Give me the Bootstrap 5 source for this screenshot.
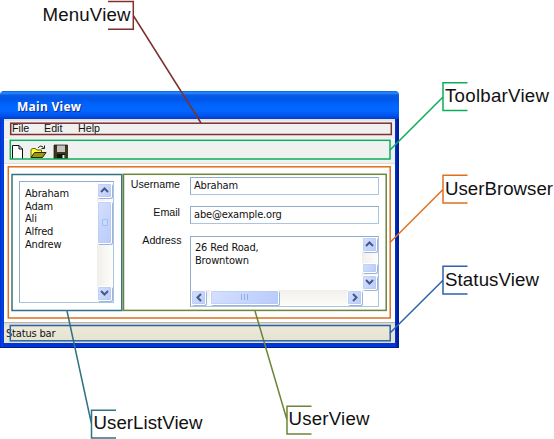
<!DOCTYPE html>
<html lang="en">
<head>
<meta charset="utf-8">
<title>Main View</title>
<link href="https://cdn.jsdelivr.net/npm/bootstrap@5.3.0/dist/css/bootstrap.min.css" rel="stylesheet">
<style>
body{width:554px;height:439px;background:#fff;font-family:"Liberation Sans",Arial,sans-serif;color:#111}
.canvas{width:554px;height:439px;padding-top:91px}
.callouts{pointer-events:none}
.callouts text{font-size:18.67px;fill:#111}
.win{width:399px;height:257px;background:linear-gradient(90deg,#0a2cc8,#0046e6 2px,#0038d8 4px,#0038d8 395px,#0020a8 397px,#001a90);border-radius:5px 5px 0 0;padding:0 4px 4px;border-bottom:1px solid #001a90}
.titlebar{height:28px;margin:0 -4px;padding:3px 0 0 17px;border-radius:4px 4px 0 0;background:linear-gradient(#0a62e4,#2b8cff 2px,#0a5ce6 4px,#0056e8 8px,#0066ff 15px,#0066ff 20px,#0050e8 25px,#003cc8);color:#fff;font:bold 12px "Noto Sans","Open Sans",sans-serif;letter-spacing:.3px;text-shadow:1px 1px #0a2f9c}
.menus{height:21px;background:#f0f0f0;border-top:2px solid #e2e2ea;border-bottom:1px solid #fff;font-size:10.7px;padding:1px 0 0 8px;line-height:13px}
.menus span:nth-child(1){width:32px}.menus span:nth-child(2){width:34px}
.tools{height:24px;background:#f0f1f1;border-bottom:1px solid #deded2;padding:4px 0 0 8px}
.main{height:159px;padding:17px 0 0 15px}
.tah{font:11px/12.8px "DejaVu Sans Condensed","DejaVu Sans",sans-serif;letter-spacing:-.17px}
.field{border:1px solid #8facca;border-right-color:#a9c6de;border-bottom-color:#a9c6de;background:#fff}
.names{width:95px;height:122px;padding:1px 0 1px 5px}
.names .items{padding-top:5px}
.vbar{width:16px;background:linear-gradient(90deg,#f1efea,#fdfdfb)}
.hbar{height:16px;background:linear-gradient(#f1efea,#fdfdfb)}
.grip{background:linear-gradient(120deg,#d5e0ff,#b9cbfa);border:1px solid #fff;border-radius:2px;box-shadow:inset 0 0 0 .5px #b3c5ee,1px 1px 0 #9bb4dc;flex:none}
.sq{width:15px;height:15px}
.form-part{margin-left:12px;width:253px}
.lbl{font-size:10.7px;line-height:13px;text-align:right}
.line1{height:18px;width:189px;padding:2px 0 0 3px}
.addr{width:189px;height:71px}
.status{height:21px;background:linear-gradient(#dedace,#ece9d8 5px,#e5e1cf);border-top:1px solid #b8b5aa;padding:5px 0 0 2px}
</style>
<script src="https://cdn.jsdelivr.net/npm/bootstrap@5.3.0/dist/js/bootstrap.bundle.min.js"></script>
</head>
<body class="m-0 overflow-hidden">
<div class="canvas position-relative">
  <div class="win d-flex flex-column">
    <div class="titlebar d-flex align-items-center">Main View</div>
    <div class="menus d-flex"><span>File</span><span>Edit</span><span>Help</span></div>
    <div class="tools d-flex">
      <svg width="60" height="15" viewBox="12 145 60 15">
        <path d="M12.500 160V146.500H19L22.500 150V160" fill="#fff" stroke="#111"/><path d="M19 146.500V150H22.500" fill="none" stroke="#111"/>
        <path d="M31 158.500V150.500L33 149.500H35.500L36.500 151H41.500V153" fill="#ffff3c" stroke="#6a6400"/>
        <path d="M31 158.500L34.500 153.500H46L42.500 158.500Z" fill="#9c9610" stroke="#2a2800"/>
        <path d="M38 149Q40.500 145.500 43.500 148.500M44.500 146.500V149.500H41.500" fill="none" stroke="#222"/>
        <path d="M54 146H67.500V160H54Z" fill="#3c3a16" stroke="#111" stroke-width=".7"/>
        <path d="M57 146.500H65V153H57Z" fill="#c4c4c4"/><path d="M57 155H65V160H57Z" fill="#111"/><path d="M62.500 156H64.500V159H62.500Z" fill="#e8e8e8"/>
      </svg>
    </div>
    <div class="main bg-white d-flex">
      <div class="names field d-flex justify-content-between tah">
        <div class="items"><div>Abraham</div><div>Adam</div><div>Ali</div><div>Alfred</div><div>Andrew</div></div>
        <div class="vbar d-flex flex-column">
          <div class="grip sq d-flex align-items-center justify-content-center"><svg width="9" height="6"><path d="M1 5L4.500 1.500L8 5" fill="none" stroke="#445a85" stroke-width="2"/></svg></div>
          <div class="grip d-flex align-items-center justify-content-center" style="height:43px;width:15px;margin-top:3px"><svg width="6" height="7"><path d="M.5 .5H5.500V6.500H.5Z" fill="#c6dcff" stroke="#9fc0f4"/></svg></div>
          <div class="grip sq mt-auto d-flex align-items-center justify-content-center"><svg width="9" height="6"><path d="M1 1L4.500 4.500L8 1" fill="none" stroke="#445a85" stroke-width="2"/></svg></div>
        </div>
      </div>
      <div class="form-part d-flex flex-column" style="margin-top:-4px">
        <div class="d-flex justify-content-between"><div class="lbl" style="padding-top:1px;width:54px">Username</div><div class="field line1 tah">Abraham</div></div>
        <div class="d-flex justify-content-between" style="margin-top:11px"><div class="lbl" style="width:54px">Email</div><div class="field line1 tah">abe@example.org</div></div>
        <div class="d-flex justify-content-between" style="margin-top:12px"><div class="lbl" style="margin-top:-2px;width:55.500px">Address</div>
          <div class="field addr d-flex flex-column">
            <div class="d-flex justify-content-between flex-grow-1">
              <div class="tah" style="padding:5px 0 0 4px">26 Red Road,<br>Browntown</div>
              <div class="vbar d-flex flex-column">
                <div class="grip sq d-flex align-items-center justify-content-center"><svg width="9" height="6"><path d="M1 5L4.500 1.500L8 5" fill="none" stroke="#445a85" stroke-width="2"/></svg></div>
                <div class="grip" style="height:10px;width:15px;margin-top:11px"></div>
                <div class="grip sq mt-auto d-flex align-items-center justify-content-center"><svg width="9" height="6"><path d="M1 1L4.500 4.500L8 1" fill="none" stroke="#445a85" stroke-width="2"/></svg></div>
              </div>
            </div>
            <div class="hbar d-flex" style="margin-right:16px">
              <div class="grip sq d-flex align-items-center justify-content-center"><svg width="6" height="9"><path d="M5 1L1.500 4.500L5 8" fill="none" stroke="#445a85" stroke-width="2"/></svg></div>
              <div class="grip d-flex align-items-center justify-content-center" style="width:69px;height:15px;margin-left:4px"><svg width="8" height="7"><path d="M.5 0V6M3.500 0V6M6.500 0V6" stroke="#93b0ee"/></svg></div>
              <div class="grip sq ms-auto d-flex align-items-center justify-content-center"><svg width="6" height="9"><path d="M1 1L4.500 4.500L1 8" fill="none" stroke="#445a85" stroke-width="2"/></svg></div>
            </div>
          </div>
        </div>
      </div>
    </div>
    <div class="status tah">Status bar</div>
  </div>

  <!-- region outlines, connectors and labels over the window -->
  <svg class="callouts position-absolute top-0 start-0" width="554" height="439" fill="none" stroke-width="1.500">
    <g stroke="#7d302c"><rect x="10.700" y="123.200" width="380.600" height="11.300"/><path d="M108 1.500H133.300V29.200H108M133.300 15.500L201 123"/></g>
    <g stroke="#0cae5b"><rect x="10.300" y="140.300" width="379.700" height="18.700"/><path d="M467.500 82.800H443V110.500H467.500M443 97L390 150"/></g>
    <g stroke="#dd701f"><rect x="8.300" y="166.800" width="381.900" height="151.200"/><path d="M467.500 175.300H443V203H467.500M443 189.500L390 242.500"/></g>
    <g stroke="#2f7384"><rect x="12" y="174.500" width="109.800" height="136"/><path d="M116 410.300H91.500V437.900H116M91.500 424L67 311"/></g>
    <g stroke="#6d843a"><rect x="123.500" y="174.300" width="262.700" height="136.100"/><path d="M311.500 406.300H287V433.900H311.500M287 420L255 311"/></g>
    <g stroke="#2d63aa"><rect x="10.300" y="325.500" width="379.900" height="15.300"/><path d="M467.500 266.300H443V294H467.500M443 280.300L390 333"/></g>
    <g stroke="none">
      <text x="42.500" y="21" textLength="88">MenuView</text><text x="445" y="102" textLength="104">ToolbarView</text><text x="445" y="194.500" textLength="108">UserBrowser</text>
      <text x="445" y="285.500" textLength="94">StatusView</text><text x="93.500" y="429" textLength="109">UserListView</text><text x="288.500" y="425" textLength="81">UserView</text>
    </g>
  </svg>
</div>
</body>
</html>
